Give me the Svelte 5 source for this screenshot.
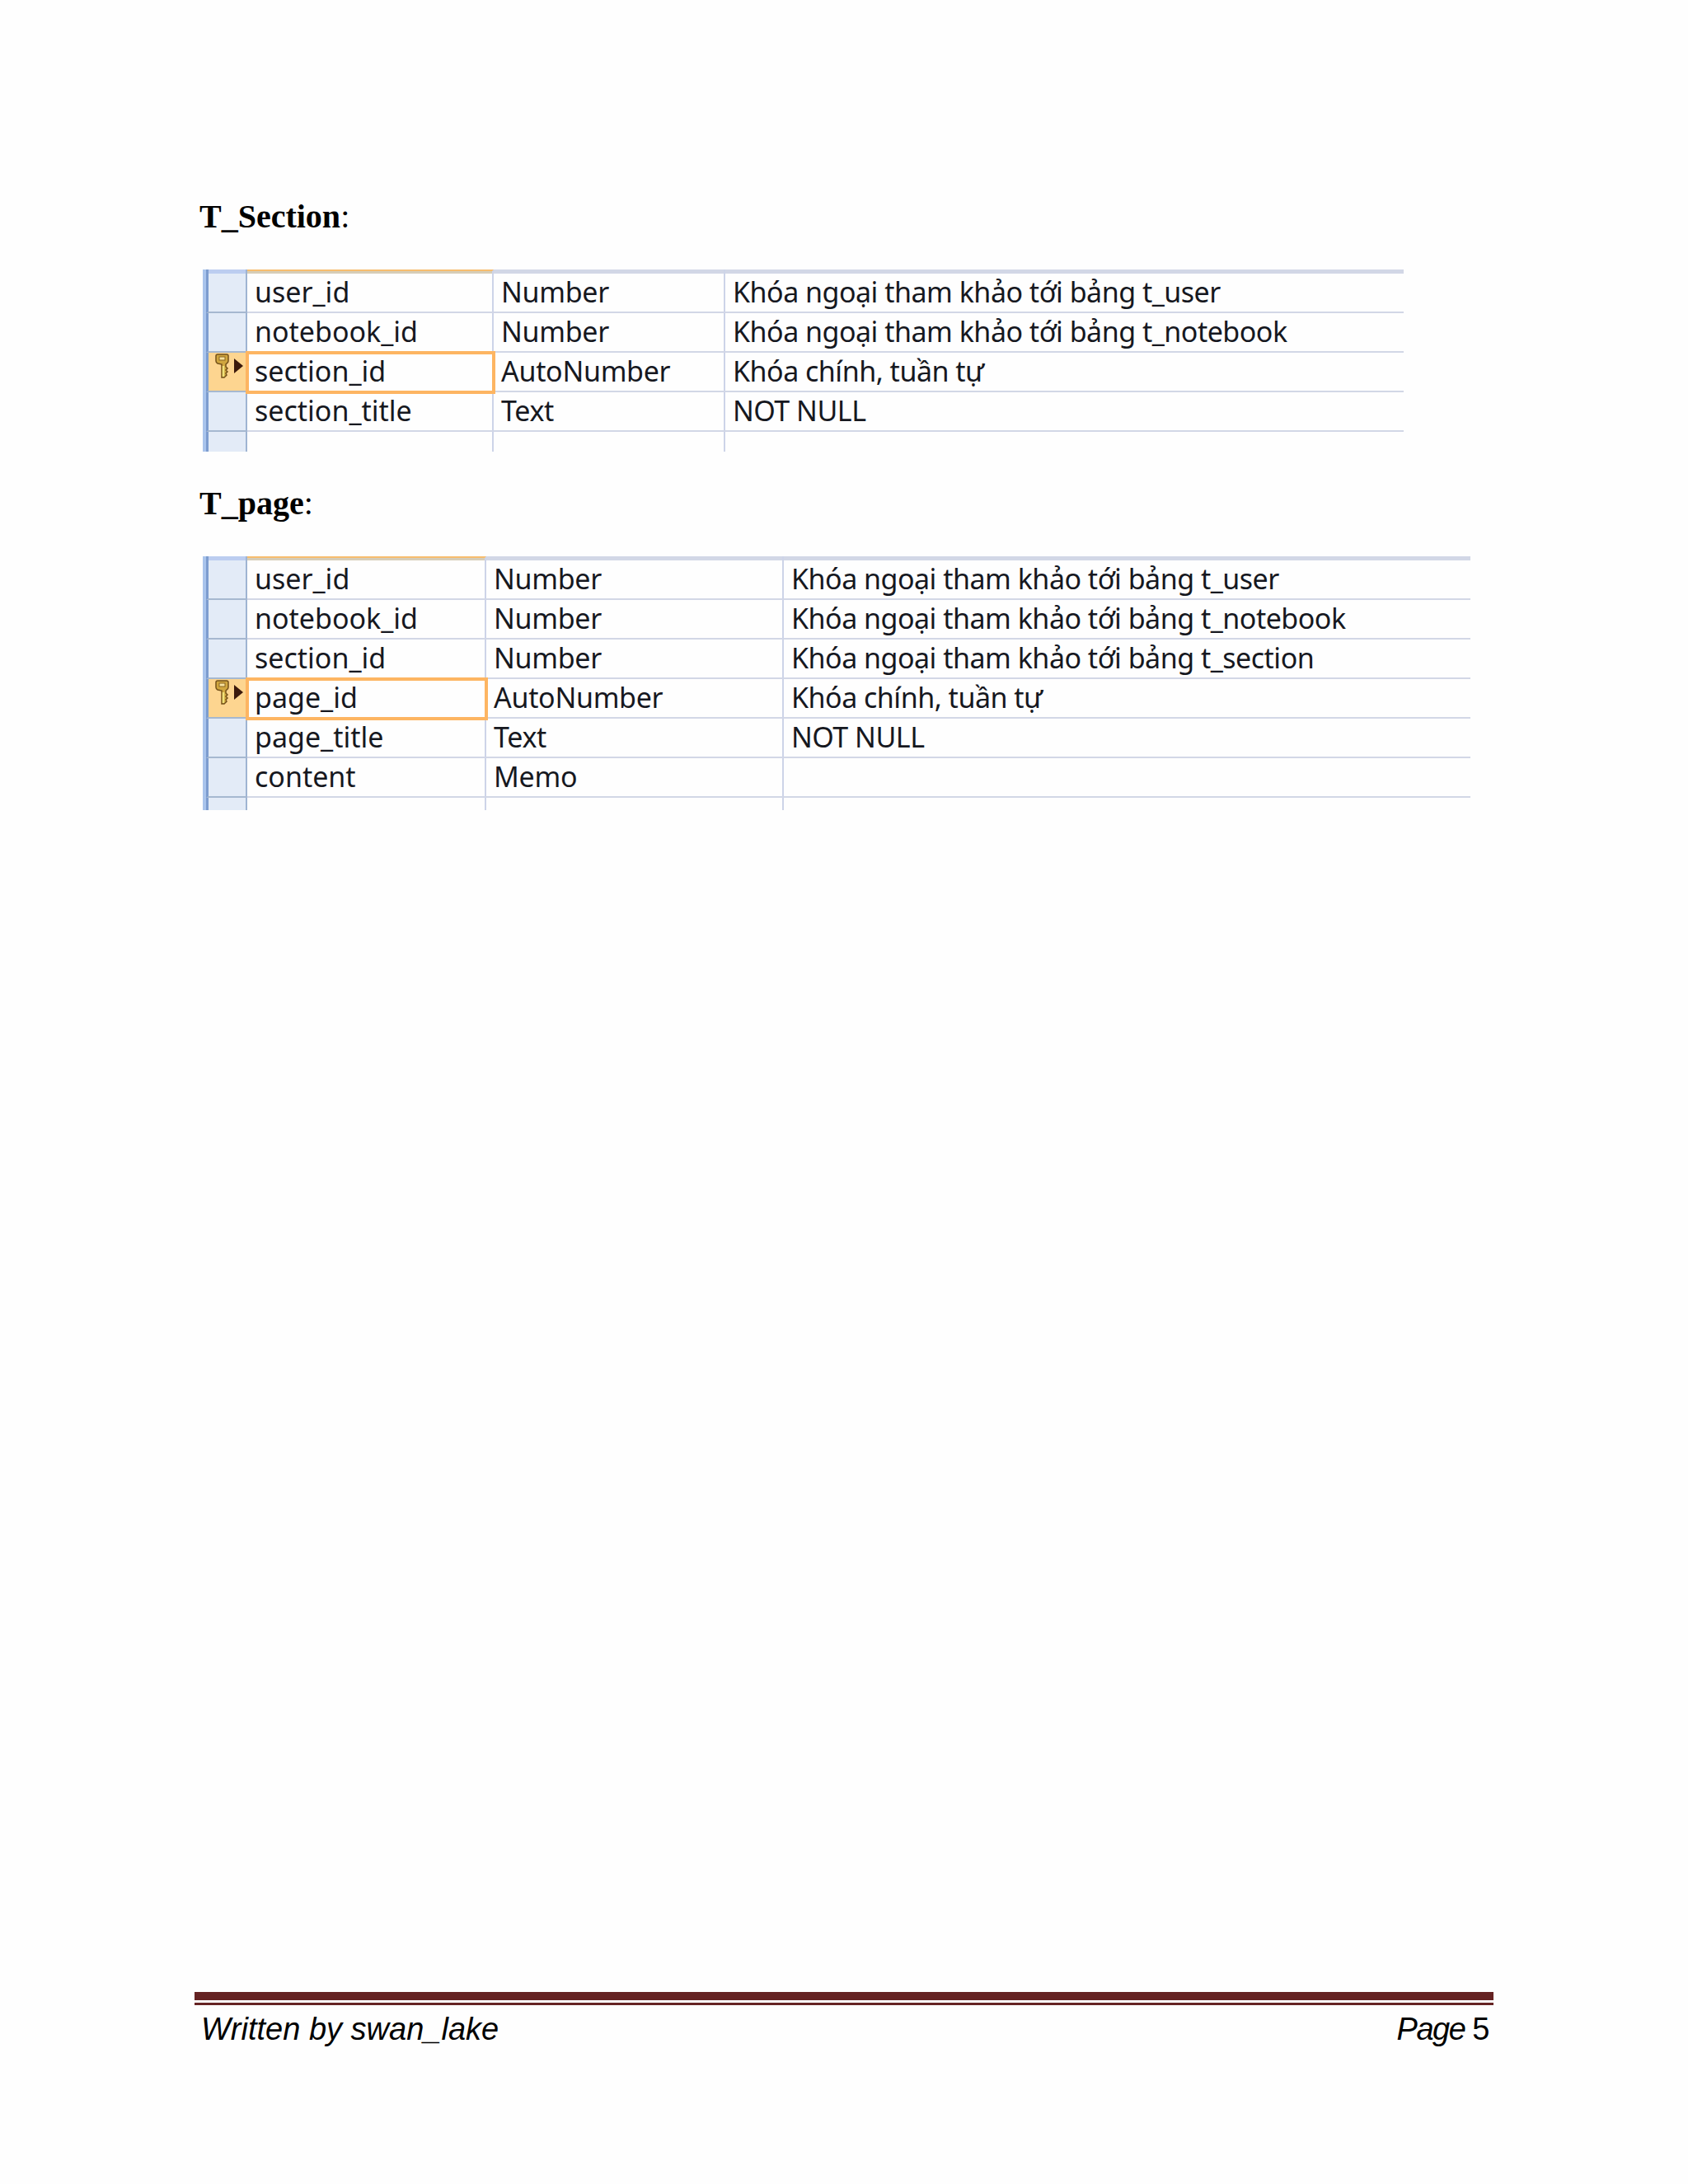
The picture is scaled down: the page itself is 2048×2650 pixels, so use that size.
<script>
  const sections = [
    {
      title: "T_Section",
      cols: "50px 299px 281px 823px",
      rows: [
        ["user_id", "Number", "Khóa ngoại tham khảo tới bảng t_user"],
        ["notebook_id", "Number", "Khóa ngoại tham khảo tới bảng t_notebook"],
        ["section_id", "AutoNumber", "Khóa chính, tuần tự", true],
        ["section_title", "Text", "NOT NULL"],
      ],
    },
    {
      title: "T_page",
      short: true,
      cols: "50px 290px 361px 833px",
      rows: [
        ["user_id", "Number", "Khóa ngoại tham khảo tới bảng t_user"],
        ["notebook_id", "Number", "Khóa ngoại tham khảo tới bảng t_notebook"],
        ["section_id", "Number", "Khóa ngoại tham khảo tới bảng t_section"],
        ["page_id", "AutoNumber", "Khóa chính, tuần tự", true],
        ["page_title", "Text", "NOT NULL"],
        ["content", "Memo", ""],
      ],
    },
  ];
</script>

<div class="page">
  <main class="content">
    {#each sections as s}
      <h2><b>{s.title}</b>:</h2>
      <div class="sheet" class:short={s.short} style="grid-template-columns: {s.cols}">
        <div class="sel head"></div>
        <div class="cell head first"></div>
        <div class="cell head"></div>
        <div class="cell head"></div>

        {#each s.rows as r}
          <div class="sel" class:on={r[3]}>
            {#if r[3]}
              <svg class="key" width="36" height="32" viewBox="0 0 36 32">
                <path d="M2 3q0-2 2-2h11q2 0 2 2v6q0 2-2 3l-1 1v3l2 2-2 2 2 2-2 2 1 2-3 3H9V13L4 12q-2-1-2-3z" fill="#d0a63f" stroke="#74511a" stroke-width="1.5"/>
                <rect x="6" y="4" width="7" height="4" fill="#f7e3a0" stroke="#8a6420"/>
                <path d="M11 15v13" stroke="#f0e27a" stroke-width="2.5"/>
                <path d="M24 6l11 9-11 9z" fill="#3c1a0c"/>
              </svg>
            {/if}
          </div>
          <div class="cell name" class:active={r[3]}>{r[0]}</div>
          <div class="cell type">{r[1]}</div>
          <div class="cell note">{r[2]}</div>
        {/each}

        <div class="sel tail"></div>
        <div class="cell tail"></div>
        <div class="cell tail"></div>
        <div class="cell tail"></div>
      </div>
    {/each}
  </main>

  <footer>
    <div class="rule"></div>
    <div class="foot">
      <span><i>Written by swan_lake</i></span>
      <span class="num"><i>Page</i> 5</span>
    </div>
  </footer>
</div>

<style>
  :global(body) {
    margin: 0;
    background: #fefefe;
  }

  .page {
    width: 2048px;
    height: 2650px;
    display: flex;
    flex-direction: column;
    justify-content: space-between;
    padding: 235px 0 163px 0;
    box-sizing: border-box;
  }

  .content {
    padding-left: 242px;
  }

  h2 {
    margin: 0 0 36px 0;
    font: 400 40px/56px "Liberation Serif", serif;
    color: #000;
  }

  .sheet {
    display: grid;
    margin: 0 0 35px 4px;
    border-left: 4px solid #a9c4ec;
    font: 34px "Noto Sans", sans-serif;
    color: #16181f;
    width: fit-content;
  }

  .sel {
    height: 46px;
    background: #e3ebf7;
    border-left: 3px solid #7d9dcf;
    border-right: 2px solid #9fb4d2;
    border-bottom: 2px solid #a6b8d0;
    position: relative;
  }

  .sel.on {
    background: #fdd590;
  }

  .sel.head {
    height: 5px;
    background: #bccdf0;
    border-bottom: 0;
  }

  .sel.tail {
    height: 24px;
    border-bottom: 0;
  }

  .short .sel.tail,
  .short .cell.tail {
    height: 15px;
  }

  .key {
    position: absolute;
    left: 7px;
    top: 1px;
  }

  .cell {
    height: 46px;
    line-height: 45px;
    padding-left: 9px;
    border-right: 2px solid #cdd4e8;
    border-bottom: 2px solid #d2d7e6;
    white-space: nowrap;
    position: relative;
  }

  .cell.type {
    letter-spacing: -0.3px;
  }

  .cell.note {
    letter-spacing: -0.5px;
    border-right: 0;
  }

  .cell:nth-child(4n) {
    border-right: 0;
  }

  .cell.head {
    height: 5px;
    background: #d2d7e6;
    border-bottom: 0;
  }

  .cell.head.first {
    background: #d6cdb8;
    border-top: 2px solid #f7bd6e;
    height: 3px;
  }

  .cell.tail {
    height: 24px;
    border-bottom: 0;
  }

  .cell.active {
    outline: 4px solid #fdb562;
    outline-offset: -2px;
    z-index: 1;
  }

  footer {
    padding-left: 236px;
  }

  .rule {
    width: 1576px;
    height: 10px;
    margin-bottom: 6px;
    background: #652323;
    position: relative;
  }

  .rule::after {
    content: "";
    position: absolute;
    left: 0;
    right: 0;
    bottom: -6px;
    height: 3px;
    background: #652323;
  }

  .foot {
    width: 1570px;
    display: flex;
    justify-content: space-between;
    padding: 4px 0 0 8px;
    box-sizing: border-box;
    font: 38px/50px "Liberation Sans", sans-serif;
    color: #000;
  }

  .num {
    letter-spacing: -1.5px;
  }
</style>
